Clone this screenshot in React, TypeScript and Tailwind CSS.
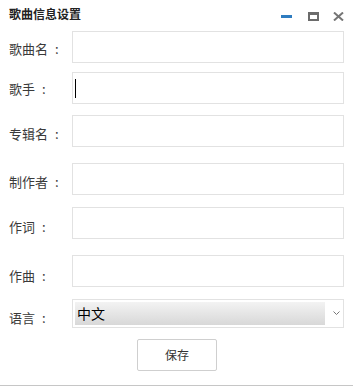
import { useState } from "react";

const font = { fontFamily: '"Microsoft YaHei", "Noto Sans CJK SC", "Noto Sans", sans-serif' };

type Field = { key: string; label: string; mt: string; pt: string };

const fields: Field[] = [
  { key: "name", label: "歌曲名", mt: "mt-[31px]", pt: "pt-[11px]" },
  { key: "singer", label: "歌手", mt: "mt-[9px]", pt: "pt-[10px]" },
  { key: "album", label: "专辑名", mt: "mt-[11px]", pt: "pt-[12px]" },
  { key: "producer", label: "制作者", mt: "mt-[16px]", pt: "pt-[12px]" },
  { key: "lyricist", label: "作词", mt: "mt-[12px]", pt: "pt-[13px]" },
  { key: "composer", label: "作曲", mt: "mt-[16px]", pt: "pt-[14px]" },
];

const Label = ({ text, pt }: { text: string; pt: string }) => (
  <label className={`w-[72px] pl-[9px] ${pt} flex text-[13px] leading-[14px] text-[#3a3a3a] whitespace-nowrap`}>
    <span>{text}</span>
    <span className="ml-[7px]">:</span>
  </label>
);

const App = () => {
  const [values, setValues] = useState<Record<string, string>>({});

  return (
    <div className="relative w-[353px] h-[387px] bg-white overflow-hidden" style={font}>
      {/* Title bar */}
      <div className="absolute left-0 top-0 w-full h-[28px] flex items-start">
        <h1 className="ml-[9px] mt-[7px] text-[12px] leading-[14px] font-bold text-[#222]">歌曲信息设置</h1>
        <div className="ml-auto flex items-start">
          <button className="mt-[15px] mr-[16px] w-[11px] h-[3px] bg-[#2e7cc0]" aria-label="最小化" />
          <button className="mt-[12px] mr-[14px] w-[11px] h-[9px] border-2 border-t-[3px] border-[#6b6b6b]" aria-label="最大化" />
          <button className="mt-[12px] mr-[9px] w-[11px] h-[9px]" aria-label="关闭">
            <svg viewBox="0 0 11 9" width="11" height="9" className="block">
              <path d="M1 0.5 L10 8.5 M10 0.5 L1 8.5" stroke="#767676" strokeWidth="2" fill="none" />
            </svg>
          </button>
        </div>
      </div>

      <div className="flex flex-col">
        {fields.map((f) => (
          <div key={f.key} className={`flex items-start ${f.mt}`}>
            <Label text={f.label} pt={f.pt} />
            <div className="relative">
              <input
                value={values[f.key] ?? ""}
                onChange={(e) => setValues({ ...values, [f.key]: e.target.value })}
                className="block w-[272px] h-[32px] border border-[#e2e2e2] px-[3px] text-[13px] text-[#333] outline-none"
              />
              {f.key === "singer" && (
                <span className="absolute left-[3px] top-[7px] w-px h-[19px] bg-black" />
              )}
            </div>
          </div>
        ))}

        {/* Language */}
        <div className="flex items-start mt-[12px]">
          <Label text="语言" pt="pt-[12px]" />
          <div className="w-[272px] h-[29px] border border-[#e2e2e2] flex items-center pl-[2px] pr-[3px]">
            <div className="w-[250px] h-[23px] bg-gradient-to-b from-[#f3f3f3] to-[#d8d8d8] text-[14px] leading-[23px] text-black pl-[2px]">
              中文
            </div>
            <svg viewBox="0 0 7 5" width="7" height="5" className="ml-auto">
              <path d="M0.5 0.5 L3.5 3.5 L6.5 0.5" stroke="#777" strokeWidth="1" fill="none" />
            </svg>
          </div>
        </div>

        <div className="mt-[11px] flex">
          <button className="ml-[137px] w-[80px] h-[32px] border border-[#cfcfcf] rounded-[2px] bg-white text-[12px] text-[#333]">
            保存
          </button>
        </div>
      </div>

      <div className="absolute left-0 bottom-[1px] w-full h-px bg-[#c6c6c6]" />
    </div>
  );
};

export default App;
